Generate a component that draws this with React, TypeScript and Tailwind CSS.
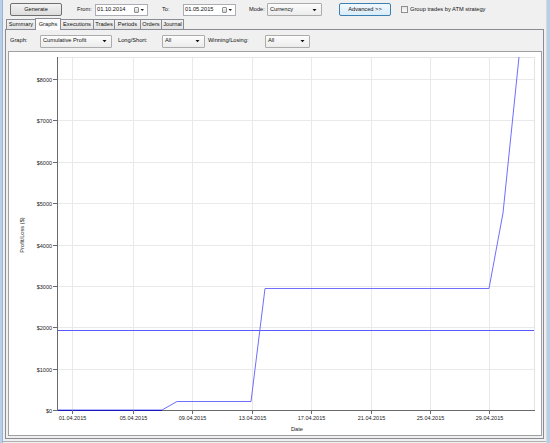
import React from "react";

function DateBox({ value }: { value: string }) {
  return (
    <div className="w-[53px] h-[12px] bg-white border border-[#abadb3] flex items-center pl-[1px] shrink-0">
      <span className="flex-1 leading-none">{value}</span>
      <div className="w-[5px] h-[6px] border border-[#8f8f8f] bg-gradient-to-b from-[#fbfbfb] to-[#cfcfcf] rounded-[1px]" />
      <svg width="5" height="4" viewBox="0 0 5 4" className="ml-[1px] mr-[2px]">
        <path d="M0.5 1h3.5l-1.75 2z" fill="#222" />
      </svg>
    </div>
  );
}

function Combo({ cls, value }: { cls: string; value: string }) {
  return (
    <div className={cls + " h-[13px] shrink-0 border border-[#acacac] bg-gradient-to-b from-[#fcfcfc] to-[#ececec] rounded-[1px] flex items-center pl-[2px]"}>
      <span className="flex-1 leading-none">{value}</span>
      <svg width="5" height="4" viewBox="0 0 5 4" className="mr-[4px]">
        <path d="M0.5 1h4l-2 2.2z" fill="#111" />
      </svg>
    </div>
  );
}

const tabs = [
  { label: "Summary", cls: "w-[30px]", sel: false },
  { label: "Graphs", cls: "w-[26px]", sel: true },
  { label: "Executions", cls: "w-[34px]", sel: false },
  { label: "Trades", cls: "w-[22px]", sel: false },
  { label: "Periods", cls: "w-[27px]", sel: false },
  { label: "Orders", cls: "w-[22px]", sel: false },
  { label: "Journal", cls: "w-[23px]", sel: false },
];

const xTicks = [
  { x: 63, l: "01.04.2015" },
  { x: 124, l: "05.04.2015" },
  { x: 183, l: "09.04.2015" },
  { x: 243, l: "13.04.2015" },
  { x: 302, l: "17.04.2015" },
  { x: 362, l: "21.04.2015" },
  { x: 421, l: "25.04.2015" },
  { x: 480, l: "29.04.2015" },
];

const yTicks = [0, 1, 2, 3, 4, 5, 6, 7, 8].map((k) => ({
  y: Math.round(358 - 41.375 * k),
  l: "$" + k * 1000,
}));

function Chart() {
  const F = "Liberation Sans, Arial, sans-serif";
  return (
    <svg width="532" height="383" viewBox="0 0 532 383" className="block">
      <rect x="0" y="0" width="532" height="383" fill="#ffffff" />
      {xTicks.map((t) => (
        <line key={"gx" + t.x} x1={t.x + 0.5} y1={5} x2={t.x + 0.5} y2={358} stroke="#e9e9e9" strokeWidth="1" />
      ))}
      {yTicks.slice(1).map((t) => (
        <line key={"gy" + t.y} x1={48} y1={t.y + 0.5} x2={525} y2={t.y + 0.5} stroke="#e9e9e9" strokeWidth="1" />
      ))}
      <line x1={48} y1={5.5} x2={526} y2={5.5} stroke="#e4e4e4" />
      <line x1={525.5} y1={5} x2={525.5} y2={358} stroke="#e4e4e4" />
      <rect x={49} y={278} width={476} height={1} fill="#5a5aff" />
      <polyline
        points="48,358 153,358 168,349.5 242,349.5 256,236.5 480,236.5 494,161 510,5"
        fill="none"
        stroke="#6e6eff"
        strokeWidth="1"
      />
      <line x1={48.5} y1={5} x2={48.5} y2={359} stroke="#6a6a6a" />
      <line x1={48} y1={358.5} x2={526} y2={358.5} stroke="#6a6a6a" />
      <line x1={49} y1={358.5} x2={153} y2={358.5} stroke="#1a1ab8" />
      {yTicks.map((t) => (
        <g key={"yt" + t.y}>
          <line x1={44} y1={t.y + 0.5} x2={48} y2={t.y + 0.5} stroke="#6a6a6a" />
          <text x={43} y={t.y + 0.5} textAnchor="end" dominantBaseline="central" fontFamily={F} fontSize="5.5" fill="#222">
            {t.l}
          </text>
        </g>
      ))}
      {xTicks.map((t) => (
        <g key={"xt" + t.x}>
          <line x1={t.x + 0.5} y1={358} x2={t.x + 0.5} y2={362} stroke="#6a6a6a" />
          <text x={t.x + 0.5} y={365.5} textAnchor="middle" dominantBaseline="central" fontFamily={F} fontSize="5.5" fill="#222">
            {t.l}
          </text>
        </g>
      ))}
      <text x={288} y={376.5} textAnchor="middle" dominantBaseline="central" fontFamily={F} fontSize="5.7" fill="#222">
        Date
      </text>
      <text
        x={13}
        y={183}
        textAnchor="middle"
        dominantBaseline="central"
        fontFamily={F}
        fontSize="5.7"
        fill="#222"
        transform="rotate(-90 13 183)"
      >
        Profit/Loss ($)
      </text>
    </svg>
  );
}

export default function App() {
  return (
    <div className="w-[550px] h-[443px] bg-[#f0f0f0] flex overflow-hidden font-['Liberation_Sans',Arial,sans-serif] text-[5.7px] text-[#111] leading-none">
      <div className="w-[2px] bg-[#b6cfea] shrink-0" />
      <div className="w-[1px] bg-[#9fb4cc] shrink-0" />
      <div className="flex-1 flex flex-col min-w-0">
        <div className="h-[19px] flex items-center shrink-0">
          <div className="ml-[7px] w-[52px] h-[13px] border border-[#707070] rounded-[2px] bg-gradient-to-b from-[#f3f3f3] to-[#dcdcdc] flex items-center justify-center shrink-0">
            Generate
          </div>
          <span className="ml-[15px] w-[18px] shrink-0">From:</span>
          <DateBox value="01.10.2014" />
          <span className="ml-[14px] w-[21px] shrink-0">To:</span>
          <DateBox value="01.05.2015" />
          <span className="ml-[13px] w-[18px] shrink-0">Mode:</span>
          <Combo cls="w-[55px]" value="Currency" />
          <div className="ml-[17px] w-[52px] h-[13px] border border-[#3c7fb1] rounded-[2px] bg-gradient-to-b from-[#f2f9fe] to-[#d8ecfa] flex items-center justify-center shrink-0">
            Advanced &gt;&gt;
          </div>
          <div className="ml-[10px] w-[7px] h-[7px] border border-[#8e8f8f] bg-gradient-to-b from-[#e6e6e6] to-[#fafafa] shrink-0" />
          <span className="ml-[2px] whitespace-nowrap">Group trades by ATM strategy</span>
        </div>
        <div className="h-[10px] flex items-end pl-[3px] shrink-0 relative z-10">
          {tabs.map((t, i) =>
            t.sel ? (
              <div
                key={t.label}
                className={t.cls + " -ml-px h-[12px] mb-[-1px] border border-b-0 border-[#898c95] bg-[#fbfbfb] flex items-center justify-center shrink-0 relative z-10"}
              >
                {t.label}
              </div>
            ) : (
              <div
                key={t.label}
                className={t.cls + (i === 0 ? "" : " -ml-px") + " h-[10px] border border-b-0 border-[#898c95] bg-gradient-to-b from-[#f2f2f2] to-[#e3e3e3] flex items-center justify-center shrink-0"}
              >
                {t.label}
              </div>
            )
          )}
        </div>
        <div className="ml-[2px] w-[539px] h-[410px] border border-[#898c95] bg-[#f0f0f0] flex flex-col shrink-0">
          <div className="h-[21px] flex items-center shrink-0 pt-[1px]">
            <span className="ml-[4px] w-[30px] shrink-0">Graph:</span>
            <Combo cls="w-[72px]" value="Cumulative Profit" />
            <span className="ml-[6px] w-[44px] shrink-0">Long/Short:</span>
            <Combo cls="w-[43px]" value="All" />
            <span className="ml-[3px] w-[57px] shrink-0">Winning/Losing:</span>
            <Combo cls="w-[45px]" value="All" />
          </div>
          <div className="ml-[2px] w-[534px] h-[385px] border border-[#a0a0a0] bg-white shrink-0">
            <Chart />
          </div>
        </div>
        <div className="h-[2px] shrink-0" />
        <div className="h-[1px] bg-[#b0b0b0] shrink-0" />
      </div>
      <div className="w-[1px] bg-[#d8d8d8] shrink-0" />
      <div className="w-[3px] bg-[#b6cfea] shrink-0" />
    </div>
  );
}
